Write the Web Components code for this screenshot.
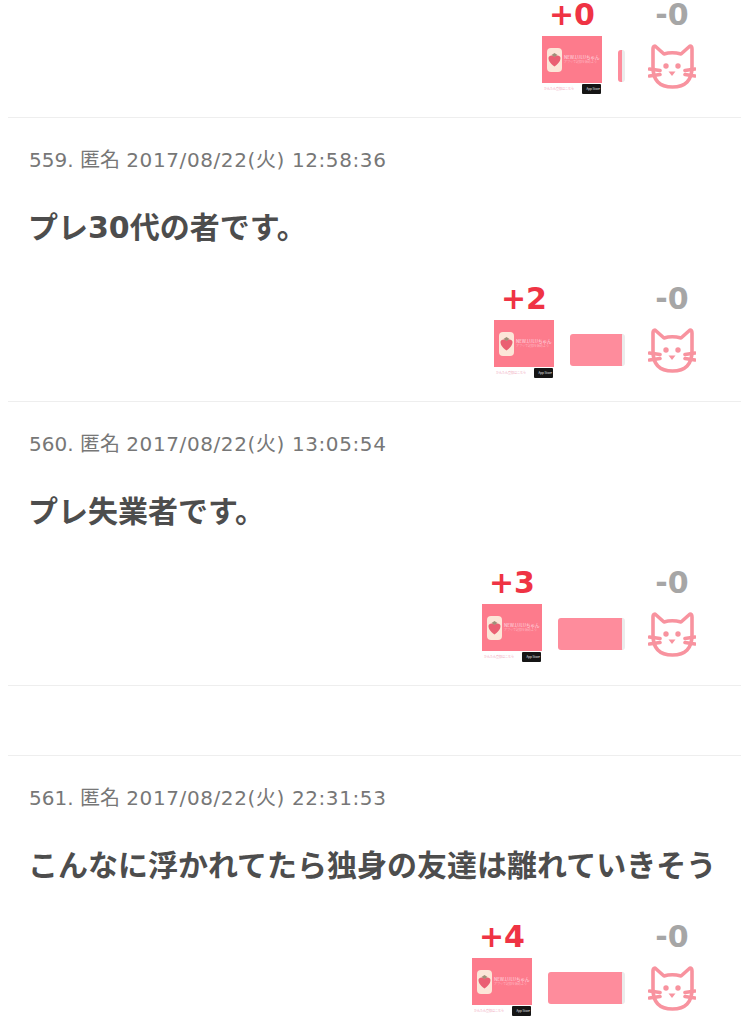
<!DOCTYPE html>
<html lang="ja">
<head>
<meta charset="utf-8">
<title>comments</title>
<style>
  body{
    margin: 0;
    background: #fff;
    font-family: "DejaVu Sans", "Noto Sans CJK JP", sans-serif;
  }
</style>
</head>
<body>
<comment-list>
  <comment-row plus="0" bar="7"></comment-row>
  <comment-row no="559" date="2017/08/22(火) 12:58:36" plus="2" bar="55">プレ30代の者です。</comment-row>
  <comment-row no="560" date="2017/08/22(火) 13:05:54" plus="3" bar="67">プレ失業者です。</comment-row>
  <ad-gap></ad-gap>
  <comment-row no="561" date="2017/08/22(火) 22:31:53" plus="4" bar="77">こんなに浮かれてたら独身の友達は離れていきそう</comment-row>
</comment-list>

<script>
class CommentList extends HTMLElement {
  constructor() {
    super();
    this.attachShadow({ mode: "open" });
    this.shadowRoot.innerHTML = `
      <style>
        :host{ display: block; height: 1022px; overflow: hidden; }
      </style>
      <slot></slot>`;
  }
}

class AdGap extends HTMLElement {
  constructor() {
    super();
    this.attachShadow({ mode: "open" });
    this.shadowRoot.innerHTML = `
      <style>
        :host{ display: block; height: 69px; margin: 0 8px; border-bottom: 1px solid #eee; }
      </style>`;
  }
}

class AdBanner extends HTMLElement {
  constructor() {
    super();
    this.attachShadow({ mode: "open" });
    this.shadowRoot.innerHTML = `
      <style>
        :host{ display: block; width: 60px; height: 58px; font-family: "Noto Sans CJK JP", sans-serif; }
        .pic{
          height: 47px;
          background: #fd7b8c;
          display: flex;
          align-items: center;
          gap: 2px;
          padding-left: 5px;
          box-sizing: border-box;
        }
        .tile{
          flex: none;
          width: 15px;
          height: 24px;
          border-radius: 4px;
          background: #fce6d8;
          display: flex;
          align-items: center;
          justify-content: center;
        }
        .copy{ color: #ffdfe3; line-height: 1; white-space: nowrap; }
        .name{ font-size: 4.500px; }
        .sub{ font-size: 3px; margin-top: 2px; color: #ffb6c0; }
        .foot{ display: flex; align-items: center; height: 11px; padding-left: 2px; }
        .note{ flex: 1; min-width: 0; font-size: 3px; color: #f0a9bc; white-space: nowrap; }
        .store{
          flex: none;
          width: 19px;
          height: 10px;
          margin-right: 1px;
          background: #151515;
          color: #e8e8e8;
          border-radius: 1px;
          font-size: 3px;
          line-height: 10px;
          text-align: right;
          padding-right: 1px;
          box-sizing: border-box;
        }
      </style>
      <div class="pic">
        <div class="tile">
          <svg width="13" height="15" viewBox="0 0 13 15"><path d="M6.500 14.500 C1.500 11 .5 8 .5 6 C.5 3.500 4 2.500 6.500 4.500 C9 2.500 12.500 3.500 12.500 6 C12.500 8 11.500 11 6.500 14.500Z" fill="#ea5f72"/><path d="M3.500 3 L6.500 1 L9.500 3 L6.500 5Z" fill="#a08f78"/></svg>
        </div>
        <div class="copy">
          <div class="name">NEW.LULUちゃん</div>
          <div class="sub">アプリで記録を始めよう</div>
        </div>
      </div>
      <div class="foot">
        <span class="note">かんたん登録はこちら</span>
        <span class="store">App Store</span>
      </div>`;
  }
}

class CatIcon extends HTMLElement {
  constructor() {
    super();
    this.attachShadow({ mode: "open" });
    this.shadowRoot.innerHTML = `
      <style>
        :host{ display: block; width: 48px; height: 46px; }
        svg{ display: block; }
      </style>
      <svg width="48" height="46" viewBox="0 0 48 46" fill="none" stroke="#f8939f" stroke-width="3.600" stroke-linecap="round" stroke-linejoin="round">
        <path d="M7 3 L16 11 Q24 8.500 33 11 L42 3 Q44 3 44 6 V24 Q44 44 24.500 44 Q5 44 5 24 V6 Q5 3 7 3 Z"/>
        <path d="M1.500 26 L12 27.500 M1.500 33 L12 31.500 M47 26 L37 27.500 M47 33 L37 31.500"/>
        <circle cx="18" cy="23" r="2.700" fill="#f8939f" stroke="none"/>
        <circle cx="30" cy="23" r="2.700" fill="#f8939f" stroke="none"/>
        <path d="M20.500 28.500 H27.500 L24 33 Z" fill="#f8939f" stroke="none"/>
      </svg>`;
  }
}

const rowTemplate = document.createElement("template");
rowTemplate.innerHTML = `
  <style>
    :host{
      display: block;
      margin: 0 8px;
      padding-right: 45px;
      border-bottom: 1px solid #eee;
    }
    .head{
      padding: 30px 0 0 21px;
      font-size: 20px;
      line-height: 24px;
      color: #777;
      white-space: nowrap;
    }
    .date{ letter-spacing: .6px; }
    .body{
      padding: 33px 0 33px 20px;
      font-size: 30px;
      font-weight: 700;
      line-height: 46px;
      color: #4d4d4d;
      white-space: nowrap;
    }
    .votes{
      display: flex;
      justify-content: flex-end;
      align-items: flex-start;
      height: 117px;
    }
    :host(.first) .head, :host(.first) .body{ display: none; }
    .num{
      font-size: 30px;
      font-weight: 700;
      line-height: 30px;
      text-align: center;
      height: 36px;
    }
    .plus{ color: #ef3344; }
    .minus{ color: #a6a6a6; height: 43px; }
    .like{ width: 60px; }
    .bar{
      box-sizing: border-box;
      margin: 50px 0 0 16px;
      height: 32px;
      border-radius: 3px;
      background: #fe8c9c;
      border-right: 3px solid #ececec;
    }
    .dislike{ width: 48px; margin-left: 23px; }
  </style>
  <div class="head"><span class="who"></span> <span class="date"></span></div>
  <div class="body"><slot></slot></div>
  <div class="votes">
    <div class="like">
      <div class="num plus"></div>
      <ad-banner></ad-banner>
    </div>
    <div class="bar"></div>
    <div class="dislike">
      <div class="num minus">-0</div>
      <cat-icon></cat-icon>
    </div>
  </div>
`;

class CommentRow extends HTMLElement {
  constructor() {
    super();
    this.attachShadow({ mode: "open" });
    this.shadowRoot.appendChild(rowTemplate.content.cloneNode(true));
  }
  connectedCallback() {
    const no = this.getAttribute("no");
    if (no) {
      this.shadowRoot.querySelector(".who").textContent = no + ". 匿名";
      this.shadowRoot.querySelector(".date").textContent = this.getAttribute("date");
    } else {
      this.classList.add("first");
    }
    this.shadowRoot.querySelector(".num.plus").textContent = "+" + this.getAttribute("plus");
    this.shadowRoot.querySelector(".bar").style.width = this.getAttribute("bar") + "px";
  }
}

customElements.define("comment-list", CommentList);
customElements.define("ad-gap", AdGap);
customElements.define("ad-banner", AdBanner);
customElements.define("cat-icon", CatIcon);
customElements.define("comment-row", CommentRow);
</script>
</body>
</html>
